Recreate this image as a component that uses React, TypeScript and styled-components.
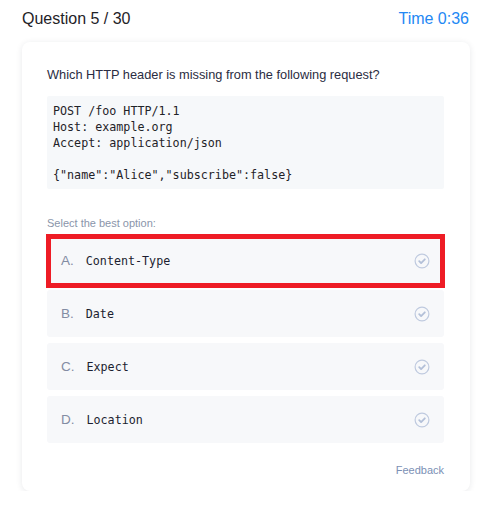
import React from "react";
import styled, { createGlobalStyle } from "styled-components";

const GlobalStyle = createGlobalStyle`
  html, body { margin: 0; padding: 0; background: #ffffff; }
  body { font-family: "Liberation Sans", Arial, sans-serif; }
  * { box-sizing: border-box; }
`;

const Page = styled.div`
  width: 448px;
  margin-left: 22px;
  padding-top: 9px;
`;

const Header = styled.div`
  display: flex;
  justify-content: space-between;
  align-items: center;
  font-size: 16px;
  line-height: 20px;
  margin-bottom: 13px;
`;

const Title = styled.span`
  color: #1f2328;
`;

const Timer = styled.span`
  color: #2388f4;
  margin-right: 1px;
`;

const Card = styled.div`
  background: #ffffff;
  border-radius: 8px;
  box-shadow: 0 1px 6px rgba(30, 40, 60, 0.1);
  padding: 24px 26px 14px 25px;
`;

const Question = styled.p`
  margin: 0 0 12px;
  font-size: 12.8px;
  line-height: 18px;
  color: #2b2d42;
`;

const Code = styled.pre`
  margin: 0;
  background: #f6f8fa;
  border-radius: 2px;
  padding: 7px 7px 6px 6px;
  font-family: "DejaVu Sans Mono", "Liberation Mono", monospace;
  font-size: 11.7px;
  line-height: 16px;
  color: #1f2328;
`;

const Hint = styled.div`
  margin-top: 27px;
  margin-bottom: 7px;
  font-size: 11px;
  line-height: 14px;
  color: #8a95aa;
`;

const Options = styled.div`
  display: flex;
  flex-direction: column;
  gap: 6px;
`;

const Option = styled.div`
  position: relative;
  display: flex;
  align-items: center;
  height: 47px;
  padding: 0 14px;
  background: #f7f8fa;
  border-radius: 3px;
`;

const Highlight = styled.div`
  position: absolute;
  top: -3px;
  bottom: -4px;
  left: -1px;
  right: -1px;
  border: 5px solid #ee1c25;
  pointer-events: none;
`;

const Letter = styled.span`
  font-size: 13.5px;
  color: #838ca3;
  margin-right: 12px;
`;

const OptionText = styled.span`
  flex: 1;
  font-family: "DejaVu Sans Mono", "Liberation Mono", monospace;
  font-size: 11.7px;
  color: #1c1e30;
`;

const CheckIcon = styled.svg`
  width: 16px;
  height: 16px;
  flex: none;
`;

const Footer = styled.div`
  display: flex;
  justify-content: flex-end;
  margin-top: 20px;
  font-size: 11px;
  line-height: 14px;
  color: #7b90b5;
`;

const Check = () => (
  <CheckIcon viewBox="0 0 16 16">
    <circle cx="8" cy="8" r="6.9" fill="none" stroke="#bfcadf" strokeWidth="1.2" />
    <polyline
      points="5.2,8.2 7.1,10.1 10.8,6.3"
      fill="none"
      stroke="#b3c0d8"
      strokeWidth="1.8"
      strokeLinecap="round"
      strokeLinejoin="round"
    />
  </CheckIcon>
);

const options = [
  { letter: "A.", text: "Content-Type", selected: true },
  { letter: "B.", text: "Date", selected: false },
  { letter: "C.", text: "Expect", selected: false },
  { letter: "D.", text: "Location", selected: false },
];

const code = `POST /foo HTTP/1.1
Host: example.org
Accept: application/json

{"name":"Alice","subscribe":false}`;

export default function App() {
  return (
    <>
      <GlobalStyle />
      <Page>
        <Header>
          <Title>Question 5 / 30</Title>
          <Timer>Time 0:36</Timer>
        </Header>
        <Card>
          <Question>Which HTTP header is missing from the following request?</Question>
          <Code>{code}</Code>
          <Hint>Select the best option:</Hint>
          <Options>
            {options.map((o) => (
              <Option key={o.letter}>
                <Letter>{o.letter}</Letter>
                <OptionText>{o.text}</OptionText>
                <Check />
                {o.selected && <Highlight />}
              </Option>
            ))}
          </Options>
          <Footer>Feedback</Footer>
        </Card>
      </Page>
    </>
  );
}
